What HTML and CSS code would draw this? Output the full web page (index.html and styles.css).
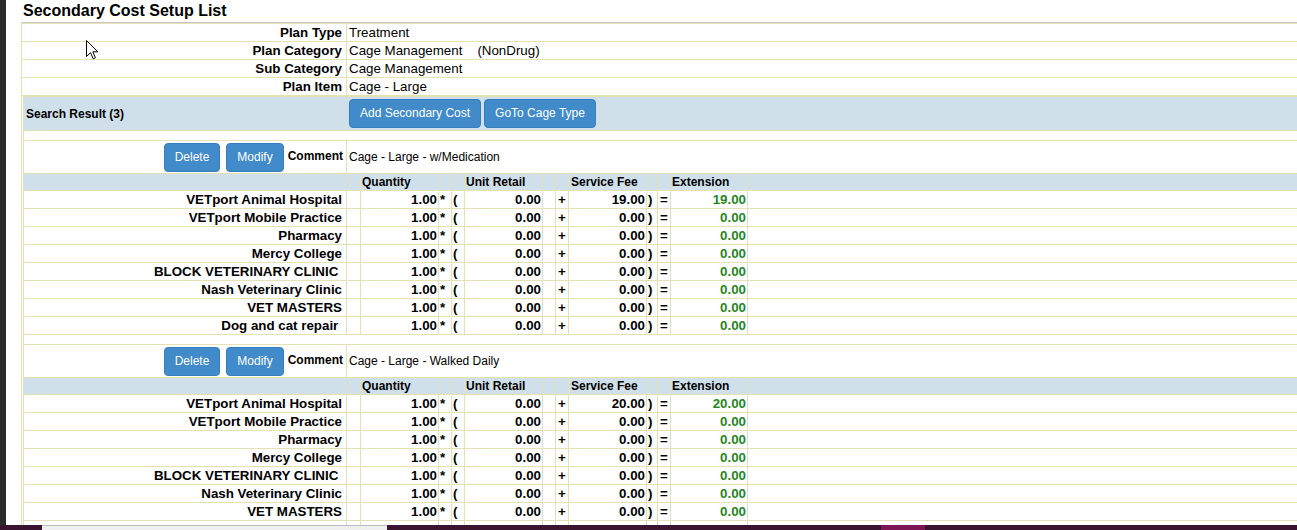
FILE: index.html
```html
<!DOCTYPE html>
<html>
<head>
<meta charset="utf-8">
<title>Secondary Cost Setup List</title>
<link rel="stylesheet" href="styles.css">
</head>
<body>
<div class="window">
  <div class="strip"></div>
  <div class="page">
    <h1 class="title">Secondary Cost Setup List</h1>
    <div class="panel">
      <div class="info">
        <div class="info-row"><div class="info-label">Plan Type</div><div class="info-value">Treatment</div></div>
        <div class="info-row"><div class="info-label">Plan Category</div><div class="info-value">Cage Management<span class="tag">(NonDrug)</span></div></div>
        <div class="info-row"><div class="info-label">Sub Category</div><div class="info-value">Cage Management</div></div>
        <div class="info-row"><div class="info-label">Plan Item</div><div class="info-value">Cage - Large</div></div>
      </div>
      <div class="results">
        <div class="search-row">
          <div class="search-label">Search Result (3)</div>
          <div class="search-actions"><button class="btn">Add Secondary Cost</button><button class="btn">GoTo Cage Type</button></div>
        </div>

        <div class="block">
          <div class="spacer"></div>
          <div class="comment-row">
            <div class="comment-label"><button class="btn">Delete</button><button class="btn">Modify</button><span class="comment-title">Comment</span></div>
            <div class="comment-value">Cage - Large - w/Medication</div>
          </div>
          <div class="grid-row head"><div class="c"></div><div class="c"></div><div class="c h">Quantity</div><div class="c"></div><div class="c"></div><div class="c h">Unit Retail</div><div class="c"></div><div class="c"></div><div class="c h h2">Service Fee</div><div class="c"></div><div class="c"></div><div class="c h">Extension</div><div class="f"></div></div>
          <div class="grid-row"><div class="c name">VETport Animal Hospital</div><div class="c"></div><div class="c num">1.00</div><div class="c op">*</div><div class="c op">(</div><div class="c num">0.00</div><div class="c"></div><div class="c op2">+</div><div class="c num">19.00</div><div class="c op">)</div><div class="c op2">=</div><div class="c num ext">19.00</div><div class="f"></div></div>
          <div class="grid-row"><div class="c name">VETport Mobile Practice</div><div class="c"></div><div class="c num">1.00</div><div class="c op">*</div><div class="c op">(</div><div class="c num">0.00</div><div class="c"></div><div class="c op2">+</div><div class="c num">0.00</div><div class="c op">)</div><div class="c op2">=</div><div class="c num ext">0.00</div><div class="f"></div></div>
          <div class="grid-row"><div class="c name">Pharmacy</div><div class="c"></div><div class="c num">1.00</div><div class="c op">*</div><div class="c op">(</div><div class="c num">0.00</div><div class="c"></div><div class="c op2">+</div><div class="c num">0.00</div><div class="c op">)</div><div class="c op2">=</div><div class="c num ext">0.00</div><div class="f"></div></div>
          <div class="grid-row"><div class="c name">Mercy College</div><div class="c"></div><div class="c num">1.00</div><div class="c op">*</div><div class="c op">(</div><div class="c num">0.00</div><div class="c"></div><div class="c op2">+</div><div class="c num">0.00</div><div class="c op">)</div><div class="c op2">=</div><div class="c num ext">0.00</div><div class="f"></div></div>
          <div class="grid-row"><div class="c name">BLOCK VETERINARY CLINIC&nbsp;</div><div class="c"></div><div class="c num">1.00</div><div class="c op">*</div><div class="c op">(</div><div class="c num">0.00</div><div class="c"></div><div class="c op2">+</div><div class="c num">0.00</div><div class="c op">)</div><div class="c op2">=</div><div class="c num ext">0.00</div><div class="f"></div></div>
          <div class="grid-row"><div class="c name">Nash Veterinary Clinic</div><div class="c"></div><div class="c num">1.00</div><div class="c op">*</div><div class="c op">(</div><div class="c num">0.00</div><div class="c"></div><div class="c op2">+</div><div class="c num">0.00</div><div class="c op">)</div><div class="c op2">=</div><div class="c num ext">0.00</div><div class="f"></div></div>
          <div class="grid-row"><div class="c name">VET MASTERS</div><div class="c"></div><div class="c num">1.00</div><div class="c op">*</div><div class="c op">(</div><div class="c num">0.00</div><div class="c"></div><div class="c op2">+</div><div class="c num">0.00</div><div class="c op">)</div><div class="c op2">=</div><div class="c num ext">0.00</div><div class="f"></div></div>
          <div class="grid-row"><div class="c name">Dog and cat repair&nbsp;</div><div class="c"></div><div class="c num">1.00</div><div class="c op">*</div><div class="c op">(</div><div class="c num">0.00</div><div class="c"></div><div class="c op2">+</div><div class="c num">0.00</div><div class="c op">)</div><div class="c op2">=</div><div class="c num ext">0.00</div><div class="f"></div></div>
        </div>

        <div class="block">
          <div class="spacer"></div>
          <div class="comment-row">
            <div class="comment-label"><button class="btn">Delete</button><button class="btn">Modify</button><span class="comment-title">Comment</span></div>
            <div class="comment-value">Cage - Large - Walked Daily</div>
          </div>
          <div class="grid-row head"><div class="c"></div><div class="c"></div><div class="c h">Quantity</div><div class="c"></div><div class="c"></div><div class="c h">Unit Retail</div><div class="c"></div><div class="c"></div><div class="c h h2">Service Fee</div><div class="c"></div><div class="c"></div><div class="c h">Extension</div><div class="f"></div></div>
          <div class="grid-row"><div class="c name">VETport Animal Hospital</div><div class="c"></div><div class="c num">1.00</div><div class="c op">*</div><div class="c op">(</div><div class="c num">0.00</div><div class="c"></div><div class="c op2">+</div><div class="c num">20.00</div><div class="c op">)</div><div class="c op2">=</div><div class="c num ext">20.00</div><div class="f"></div></div>
          <div class="grid-row"><div class="c name">VETport Mobile Practice</div><div class="c"></div><div class="c num">1.00</div><div class="c op">*</div><div class="c op">(</div><div class="c num">0.00</div><div class="c"></div><div class="c op2">+</div><div class="c num">0.00</div><div class="c op">)</div><div class="c op2">=</div><div class="c num ext">0.00</div><div class="f"></div></div>
          <div class="grid-row"><div class="c name">Pharmacy</div><div class="c"></div><div class="c num">1.00</div><div class="c op">*</div><div class="c op">(</div><div class="c num">0.00</div><div class="c"></div><div class="c op2">+</div><div class="c num">0.00</div><div class="c op">)</div><div class="c op2">=</div><div class="c num ext">0.00</div><div class="f"></div></div>
          <div class="grid-row"><div class="c name">Mercy College</div><div class="c"></div><div class="c num">1.00</div><div class="c op">*</div><div class="c op">(</div><div class="c num">0.00</div><div class="c"></div><div class="c op2">+</div><div class="c num">0.00</div><div class="c op">)</div><div class="c op2">=</div><div class="c num ext">0.00</div><div class="f"></div></div>
          <div class="grid-row"><div class="c name">BLOCK VETERINARY CLINIC&nbsp;</div><div class="c"></div><div class="c num">1.00</div><div class="c op">*</div><div class="c op">(</div><div class="c num">0.00</div><div class="c"></div><div class="c op2">+</div><div class="c num">0.00</div><div class="c op">)</div><div class="c op2">=</div><div class="c num ext">0.00</div><div class="f"></div></div>
          <div class="grid-row"><div class="c name">Nash Veterinary Clinic</div><div class="c"></div><div class="c num">1.00</div><div class="c op">*</div><div class="c op">(</div><div class="c num">0.00</div><div class="c"></div><div class="c op2">+</div><div class="c num">0.00</div><div class="c op">)</div><div class="c op2">=</div><div class="c num ext">0.00</div><div class="f"></div></div>
          <div class="grid-row"><div class="c name">VET MASTERS</div><div class="c"></div><div class="c num">1.00</div><div class="c op">*</div><div class="c op">(</div><div class="c num">0.00</div><div class="c"></div><div class="c op2">+</div><div class="c num">0.00</div><div class="c op">)</div><div class="c op2">=</div><div class="c num ext">0.00</div><div class="f"></div></div>
          <div class="grid-row"><div class="c name">Dog and cat repair&nbsp;</div><div class="c"></div><div class="c num">1.00</div><div class="c op">*</div><div class="c op">(</div><div class="c num">0.00</div><div class="c"></div><div class="c op2">+</div><div class="c num">0.00</div><div class="c op">)</div><div class="c op2">=</div><div class="c num ext">0.00</div><div class="f"></div></div>
        </div>
      </div>
    </div>
  </div>
</div>

<svg class="cursor" width="13" height="20" viewBox="0 0 13 20" aria-hidden="true">
  <path d="M0.5 0.5 L0.5 16.5 L4.5 12.7 L7.2 18.8 L9.4 17.8 L6.8 11.8 L11.8 11.8 Z" fill="#fff" stroke="#000" stroke-width="1" stroke-linejoin="miter"/>
</svg>

<div class="taskbar">
  <div class="tb tb-a"></div>
  <div class="tb tb-b"></div>
  <div class="tb tb-c"></div>
  <div class="tb tb-d"></div>
  <div class="tb tb-e"></div>
</div>
</body>
</html>
```

FILE: styles.css
```css
* { box-sizing: border-box; }

html, body {
  margin: 0;
  height: 100%;
}

body {
  font-family: "Liberation Sans", Arial, sans-serif;
  color: #000;
  background: #fff;
  overflow: hidden;
  position: relative;
}

.window {
  display: flex;
  height: 100%;
}

.strip {
  width: 6px;
  flex: none;
  background: #2b2b2b;
}

.page {
  flex: 1;
  min-width: 0;
  padding-left: 15px;
  overflow: hidden;
}

.title {
  margin: 0;
  height: 22px;
  padding-left: 2px;
  font-size: 16px;
  font-weight: bold;
  line-height: 22px;
  white-space: nowrap;
}

.panel {
  width: 1400px;
  border-top: 1px solid #c8c8c8;
  border-left: 1px solid #e6e1b4;
}

/* ---- plan info ---- */
.info {
  border-top: 1px solid #e6e1b4;
}

.info-row {
  display: grid;
  grid-template-columns: 325px 1fr;
  height: 18px;
  border-bottom: 1px solid #e6e1b4;
  font-size: 13.33px;
  line-height: 17px;
  white-space: nowrap;
}

.info-label {
  border-right: 1px solid #e6e1b4;
  padding-right: 4px;
  text-align: right;
  font-weight: bold;
}

.info-value {
  padding-left: 2px;
}

.tag {
  margin-left: 15px;
}

/* ---- results ---- */
.results {
  margin-left: 1px;
  border-left: 1px solid #e6e1b4;
}

.search-row {
  display: grid;
  grid-template-columns: 323px 1fr;
  height: 35px;
  border-top: 1px solid #e6e1b4;
  border-bottom: 1px solid #e6e1b4;
  background: #d0e0eb;
}

.search-label {
  display: flex;
  align-items: center;
  padding-left: 2px;
  font-size: 12px;
  font-weight: bold;
}

.search-actions {
  display: flex;
  align-items: center;
  gap: 3px;
  padding-left: 2px;
}

.btn {
  appearance: none;
  margin: 0;
  height: 29px;
  padding: 0 10px;
  border: 1px solid #357ebd;
  border-radius: 4px;
  background: #428bca;
  color: #fff;
  font-family: "Liberation Sans", Arial, sans-serif;
  font-size: 12px;
  line-height: 15px;
  white-space: nowrap;
}

.spacer {
  height: 10px;
  border-bottom: 1px solid #e6e1b4;
}

.comment-row {
  display: grid;
  grid-template-columns: 323px 1fr;
  height: 33px;
  border-bottom: 1px solid #e6e1b4;
  font-size: 12px;
}

.comment-label {
  display: flex;
  justify-content: flex-end;
  align-items: center;
  gap: 6px;
  padding-right: 3px;
  border-right: 1px solid #e6e1b4;
}

.comment-title {
  margin-left: -2px;
  margin-bottom: 3px;
  font-weight: bold;
}

.comment-value {
  display: flex;
  align-items: center;
  padding-left: 2px;
  white-space: nowrap;
}

.grid-row {
  display: grid;
  grid-template-columns: 323px 14px 78px 13px 13px 78px 13px 13px 78px 11px 13px 77px 1fr;
  height: 18px;
  border-bottom: 1px solid #e6e1b4;
  font-size: 13.33px;
  font-weight: bold;
  line-height: 17px;
  white-space: nowrap;
}

.grid-row.head {
  height: 17px;
  background: #d0e0eb;
  font-size: 12px;
  line-height: 16px;
}

.c {
  border-right: 1px solid #e6e1b4;
  overflow: hidden;
}

.h {
  padding-left: 1px;
}

.h2 {
  padding-left: 2px;
}

.name {
  text-align: right;
  padding-right: 4px;
}

.num {
  text-align: right;
  padding-right: 1px;
}

.op {
  padding-left: 1px;
}

.op2 {
  padding-left: 2px;
}

.ext {
  color: #1f871f;
}

/* ---- overlays ---- */
.cursor {
  position: absolute;
  left: 86px;
  top: 40px;
}

.taskbar {
  position: fixed;
  left: 0;
  right: 0;
  bottom: 0;
  height: 5px;
  display: flex;
}

.tb { height: 5px; }
.tb-a { width: 42px; background: #3b1431; }
.tb-b { width: 345px; background: #f0f0f0; border-top: 1px solid #bdbdbd; }
.tb-c { width: 494px; background: #3b1431; }
.tb-d { width: 44px; background: #7d1456; }
.tb-e { flex: 1; background: #3b1431; }
```
